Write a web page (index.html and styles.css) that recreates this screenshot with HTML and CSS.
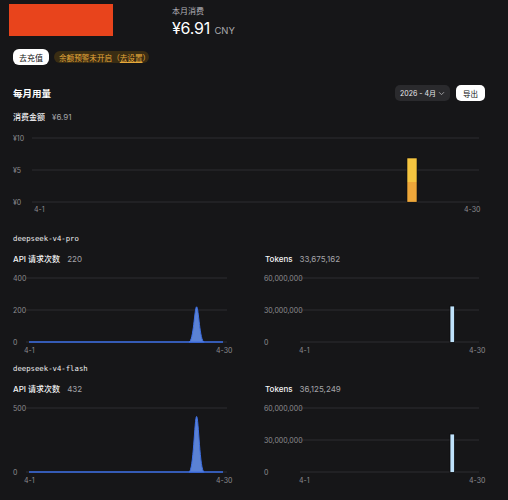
FILE: index.html
```html
<html>
<head>
<meta charset="utf-8">
<title>用量</title>
<link rel="stylesheet" href="styles.css">
</head>
<body>

<!-- TOP: logo + this month's spend -->
<div class="top">
  <div class="logo"></div>
  <div class="summary">
    <div class="summaryLabel">本月消费</div>
    <div class="summaryAmount">¥6.91 <span class="currency">CNY</span></div>
  </div>
</div>

<div class="actions">
  <a href=# class="btnRecharge">去充值</a>
  <span class="alertPill">余额预警未开启（<u>去设置</u>）</span>
</div>

<!-- MONTHLY USAGE -->
<div class="monthRow">
  <div class="monthTitle">每月用量</div>
  <div class="monthTools">
    <div class="monthSelect"><span>2026 - 4月</span>
      <svg width="7" height="5" viewBox="0 0 7 5"><path d="M1 1.2 L3.5 3.7 L6 1.2" fill="none" stroke="#9a9a9e" stroke-width="1"/></svg>
    </div>
    <a href=# class="btnExport">导出</a>
  </div>
</div>

<div class="section">
  <div class="stat"><span class="statLabel">消费金额</span><span class="statValue">¥6.91</span></div>
  <svg class="chartSpend" width="472" height="86" viewBox="13 130 472 86">
    <g class="grid">
      <line x1="32" y1="138" x2="479" y2="138" stroke-width="1.6"/>
      <line x1="32" y1="170" x2="479" y2="170"/>
      <line x1="32" y1="202" x2="479" y2="202"/>
    </g>
    <g class="axis">
      <text x="13" y="140.5">¥10</text>
      <text x="13" y="172.5">¥5</text>
      <text x="13" y="204.5">¥0</text>
      <text x="34" y="211.5">4-1</text>
      <text x="464" y="211.5">4-30</text>
    </g>
    <rect x="406.5" y="157.5" width="11" height="45" fill="#111" />
    <rect x="407.3" y="158.3" width="9.4" height="23.7" fill="#f5c540"/>
    <rect x="407.3" y="182" width="9.4" height="19.9" fill="#eea73a"/>
  </svg>
</div>

<!-- MODEL: deepseek-v4-pro -->
<div class="model">
  <div class="modelName">deepseek-v4-pro</div>
  <div class="modelCharts">
    <div>
      <div class="stat"><span class="statLabel">API 请求次数</span><span class="statValue">220</span></div>
      <svg width="252" height="84" viewBox="13 272 252 84">
        <g class="grid">
          <line x1="26" y1="278" x2="227" y2="278"/>
          <line x1="26" y1="310" x2="227" y2="310"/>
          <line x1="26" y1="342" x2="227" y2="342"/>
        </g>
        <g class="axis">
          <text x="13" y="280.5">400</text>
          <text x="13" y="312.5">200</text>
          <text x="13" y="344.5">0</text>
          <text x="24" y="352.5">4-1</text>
          <text x="216" y="352.5">4-30</text>
        </g>
        <line x1="29" y1="342" x2="223" y2="342" stroke="#3d6fe6" stroke-width="1.4"/>
        <path d="M189 342 C193.5 342 194.6 306.8 196.6 306.8 C198.6 306.8 199.7 342 204.2 342 Z" fill="#5b82d4" stroke="#3d6fe6" stroke-width="1"/>
      </svg>
    </div>
    <div>
      <div class="stat"><span class="statLabel">Tokens</span><span class="statValue">33,675,162</span></div>
      <svg width="220" height="84" viewBox="265 272 220 84">
        <g class="grid">
          <line x1="300" y1="278" x2="479" y2="278"/>
          <line x1="300" y1="310" x2="479" y2="310"/>
          <line x1="300" y1="342" x2="479" y2="342"/>
        </g>
        <g class="axis">
          <text x="264" y="280.5">60,000,000</text>
          <text x="264" y="312.5">30,000,000</text>
          <text x="264" y="344.5">0</text>
          <text x="299" y="352.5">4-1</text>
          <text x="469" y="352.5">4-30</text>
        </g>
        <rect x="450" y="306" width="4.6" height="36.4" fill="#bfe2fb" stroke="#0c0c0e" stroke-width="0.8"/>
      </svg>
    </div>
  </div>
</div>

<!-- MODEL: deepseek-v4-flash -->
<div class="model">
  <div class="modelName">deepseek-v4-flash</div>
  <div class="modelCharts">
    <div>
      <div class="stat"><span class="statLabel">API 请求次数</span><span class="statValue">432</span></div>
      <svg width="252" height="84" viewBox="13 402 252 84">
        <g class="grid">
          <line x1="26" y1="408" x2="227" y2="408"/>
          <line x1="26" y1="472" x2="227" y2="472"/>
        </g>
        <g class="axis">
          <text x="13" y="410.5">500</text>
          <text x="13" y="474.5">0</text>
          <text x="24" y="482.5">4-1</text>
          <text x="216" y="482.5">4-30</text>
        </g>
        <line x1="29" y1="472" x2="223" y2="472" stroke="#3d6fe6" stroke-width="1.4"/>
        <path d="M189 472 C193.5 472 194.6 416.5 196.6 416.5 C198.6 416.5 199.7 472 204.2 472 Z" fill="#5b82d4" stroke="#3d6fe6" stroke-width="1"/>
      </svg>
    </div>
    <div>
      <div class="stat"><span class="statLabel">Tokens</span><span class="statValue">36,125,249</span></div>
      <svg width="220" height="84" viewBox="265 402 220 84">
        <g class="grid">
          <line x1="300" y1="408" x2="479" y2="408"/>
          <line x1="300" y1="440" x2="479" y2="440"/>
          <line x1="300" y1="472" x2="479" y2="472"/>
        </g>
        <g class="axis">
          <text x="264" y="410.5">60,000,000</text>
          <text x="264" y="442.5">30,000,000</text>
          <text x="264" y="474.5">0</text>
          <text x="299" y="482.5">4-1</text>
          <text x="469" y="482.5">4-30</text>
        </g>
        <rect x="450" y="434" width="4.6" height="38.4" fill="#bfe2fb" stroke="#0c0c0e" stroke-width="0.8"/>
      </svg>
    </div>
  </div>
</div>

</body>
</html>
```

FILE: styles.css
```css
body
{
margin:0;
background:#161618;
color:#f2f2f3;
font-family:Inter, "Noto Sans CJK SC", sans-serif;
width:508px;
height:500px;
overflow:hidden;
}

svg
{
display:block;
overflow:visible;
}

div.top
{
display:flex;
padding:4px 0 0 9px;
height:32px;
}
div.logo
{
width:104px;
height:32px;
background:#e8441c;
}
div.summary
{
margin-left:59px;
}
div.summaryLabel
{
font-size:8px;
line-height:12px;
margin-top:1px;
color:#b4b4b8;
}
div.summaryAmount
{
font-size:16px;
line-height:16px;
margin-top:3px;
color:#ffffff;
letter-spacing:-0.2px;
}
span.currency
{
font-size:9.5px;
color:#a8a8ac;
letter-spacing:0;
}

div.actions
{
display:flex;
align-items:center;
gap:5px;
margin-top:13px;
padding-left:13px;
height:16px;
}
a.btnRecharge
{
display:flex;
align-items:center;
justify-content:center;
width:36px;
height:16px;
box-sizing:border-box;
background:#ffffff;
color:#111;
border-radius:6px;
font-size:8px;
text-decoration:none;
}
span.alertPill
{
display:flex;
align-items:center;
height:12px;
width:95px;
box-sizing:border-box;
padding-left:5px;
background:#3a2d13;
color:#e6a93a;
border-radius:6px;
font-size:7.6px;
white-space:nowrap;
}
span.alertPill u
{
text-underline-offset:1px;
}

div.monthRow
{
display:flex;
justify-content:space-between;
align-items:center;
margin-top:20px;
padding:0 23px 0 13px;
height:16px;
}
div.monthTitle
{
font-size:9.5px;
font-weight:bold;
color:#ffffff;
}
div.monthTools
{
display:flex;
gap:6px;
}
div.monthSelect
{
display:flex;
align-items:center;
justify-content:space-between;
width:55px;
height:16px;
box-sizing:border-box;
padding:0 5px 0 5px;
background:#2a2a2d;
border-radius:5px;
font-size:7px;
color:#e8e8ea;
white-space:nowrap;
}
a.btnExport
{
display:flex;
align-items:center;
justify-content:center;
width:29px;
height:16px;
background:#ffffff;
color:#111;
border-radius:5px;
font-size:7.5px;
text-decoration:none;
}

div.section
{
padding:0 23px 0 13px;
margin-top:10px;
}
div.stat
{
height:12px;
line-height:12px;
font-size:8px;
}
span.statLabel
{
color:#f4f4f6;
font-weight:500;
}
span.statValue
{
color:#a4a4a8;
margin-left:7px;
}
svg.chartSpend
{
margin-top:7px;
}

div.model
{
margin-top:17px;
padding:0 23px 0 13px;
}
div.model + div.model
{
margin-top:7px;
}
div.modelName
{
height:12px;
line-height:12px;
font-family:"DejaVu Sans Mono", monospace;
font-size:7.3px;
color:#f0f0f2;
}
div.modelCharts
{
display:grid;
grid-template-columns:252px 220px;
margin-top:8px;
}
div.modelCharts svg
{
margin-top:7px;
}

g.grid line
{
stroke:#2d2d30;
stroke-width:1;
}
g.axis text
{
font-family:Inter, sans-serif;
font-size:7px;
fill:#8c8c90;
}
```
